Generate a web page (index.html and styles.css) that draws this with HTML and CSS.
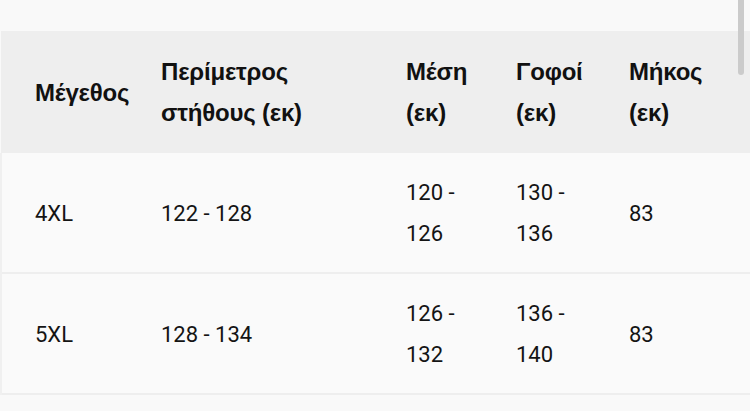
FILE: index.html
```html
<!DOCTYPE html>
<html lang="el">
<head>
<meta charset="utf-8">
<title>Πίνακας μεγεθών</title>
<link rel="stylesheet" href="styles.css">
</head>
<body>
<div class="frame">
  <table class="sizes">
    <colgroup>
      <col class="c1"><col class="c2"><col class="c3"><col class="c4"><col class="c5">
    </colgroup>
    <thead>
      <tr>
        <th>Μέγεθος</th>
        <th class="wide">Περίμετρος στήθους (εκ)</th>
        <th>Μέση (εκ)</th>
        <th>Γοφοί (εκ)</th>
        <th>Μήκος (εκ)</th>
      </tr>
    </thead>
    <tbody>
      <tr>
        <td>4XL</td>
        <td>122 - 128</td>
        <td>120 - 126</td>
        <td>130 - 136</td>
        <td>83</td>
      </tr>
      <tr>
        <td>5XL</td>
        <td>128 - 134</td>
        <td>126 - 132</td>
        <td>136 - 140</td>
        <td>83</td>
      </tr>
    </tbody>
  </table>
  <div class="thumb"></div>
</div>
</body>
</html>
```

FILE: styles.css
```css
html, body {
  margin: 0;
  padding: 0;
  background: #f9f9f9;
}

.frame {
  position: relative;
  padding-top: 31px;
  height: 380px;
}

.sizes {
  width: 750px;
  border-collapse: collapse;
  table-layout: fixed;
  color: #141414;
}

.c1 { width: 160px; }
.c2 { width: 245px; }
.c3 { width: 110px; }
.c4 { width: 113px; }
.c5 { width: 122px; }

.sizes th,
.sizes td {
  text-align: left;
  vertical-align: middle;
  line-height: 41px;
}

.sizes th {
  padding: 20px 16px 20px 0;
}

.sizes td {
  padding: 19px 30px 18px 0;
}

.sizes th:first-child {
  padding-left: 34px;
}

.sizes td:first-child {
  padding-left: 33px;
}

.sizes th.wide {
  padding-right: 60px;
}

.sizes thead tr {
  background: #eeeeee;
}

.sizes th {
  font-family: "Liberation Sans", Arial, sans-serif;
  font-weight: bold;
  font-size: 24px;
  letter-spacing: -0.2px;
  color: #111111;
  height: 81px;
}

.sizes tbody tr {
  background: #fafafa;
  border-bottom: 2px solid #eeeeee;
}

.sizes tbody td {
  font-family: Roboto, "Noto Sans", sans-serif;
  font-size: 22px;
}

.sizes tbody td:first-child {
  border-left: 2px solid #f0f0f0;
}

.sizes tbody td:last-child {
  border-right: 2px solid #f0f0f0;
}

.thumb {
  position: absolute;
  top: 0;
  right: 6px;
  width: 6px;
  height: 75px;
  border-radius: 0 0 3px 3px;
  background: #cbcbcb;
}
```
